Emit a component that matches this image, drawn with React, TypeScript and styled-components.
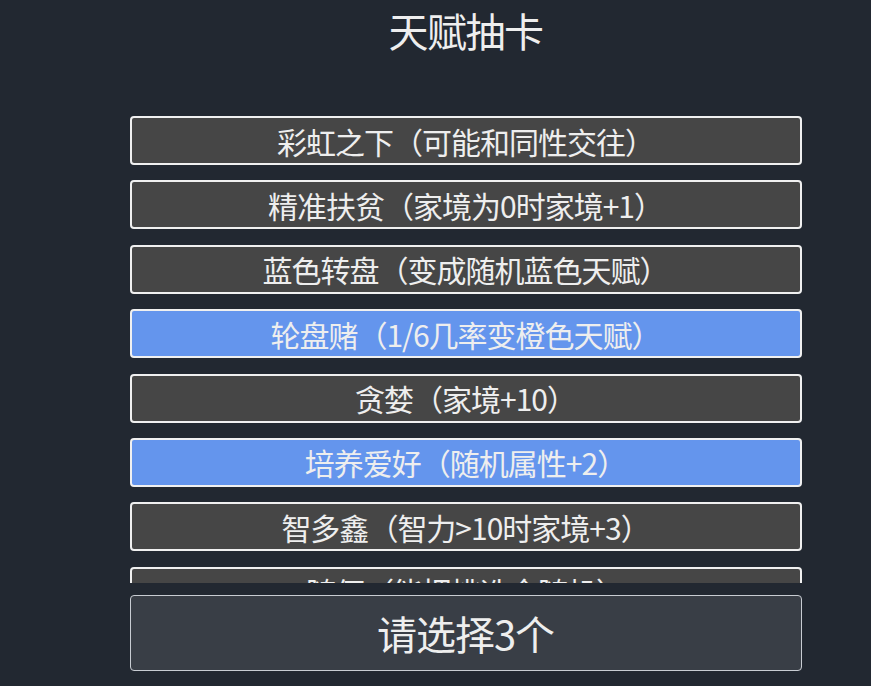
import React, { useState } from 'react'
import styled, { createGlobalStyle } from 'styled-components'

const talents = [
  { id: 1, name: '彩虹之下', desc: '可能和同性交往', picked: false },
  { id: 2, name: '精准扶贫', desc: '家境为0时家境+1', picked: false },
  { id: 3, name: '蓝色转盘', desc: '变成随机蓝色天赋', picked: false },
  { id: 4, name: '轮盘赌', desc: '1/6几率变橙色天赋', picked: true },
  { id: 5, name: '贪婪', desc: '家境+10', picked: false },
  { id: 6, name: '培养爱好', desc: '随机属性+2', picked: true },
  { id: 7, name: '智多鑫', desc: '智力>10时家境+3', picked: false },
  { id: 8, name: '随便', desc: '能把挑选全随机', picked: false },
]

export default function App() {
  const [picked, setPicked] = useState(
    talents.filter((t) => t.picked).map((t) => t.id)
  )

  const toggle = (id: number) => {
    setPicked((p) => (p.includes(id) ? p.filter((x) => x !== id) : [...p, id]))
  }

  return (
    <>
      <GlobalStyle />
      <Page>
        <Title>天赋抽卡</Title>
        <TalentList>
          {talents.map((t) => (
            <TalentItem
              key={t.id}
              $active={picked.includes(t.id)}
              onClick={() => toggle(t.id)}
            >
              {t.name}（{t.desc}）
            </TalentItem>
          ))}
        </TalentList>
        <NextButton>请选择3个</NextButton>
      </Page>
    </>
  )
}

const GlobalStyle = createGlobalStyle`
  html, body {
    margin: 0;
    padding: 0;
    background: #222831;
  }
  body {
    font-family: "Noto Sans CJK SC", "Noto Sans", sans-serif;
    color: #eeeeee;
  }
`

const Page = styled.div`
  height: 686px;
  box-sizing: border-box;
  padding-left: 60px;
  display: flex;
  flex-direction: column;
  align-items: center;
`

const Title = styled.div`
  height: 60px;
  display: flex;
  align-items: center;
  font-size: 40px;
  letter-spacing: -1.5px;
  line-height: 1;
  color: #eeeeee;
`

const TalentList = styled.ul`
  list-style: none;
  margin: 56px 0 0;
  padding: 0;
  width: 672px;
  height: 467px;
  overflow: hidden;
  display: flex;
  flex-direction: column;
  gap: 15.4px;
`

const TalentItem = styled.li<{ $active: boolean }>`
  flex: none;
  height: 49px;
  box-sizing: border-box;
  border: 2px solid #f0f0f0;
  border-radius: 4px;
  background: ${(p) => (p.$active ? '#6495ed' : '#464646')};
  display: flex;
  align-items: center;
  justify-content: center;
  font-size: 30px;
  letter-spacing: -1px;
  color: #eeeeee;
  cursor: pointer;
`

const NextButton = styled.button`
  margin-top: 12px;
  width: 672px;
  height: 76px;
  box-sizing: border-box;
  border: 1.5px solid #c8ccd2;
  border-radius: 4px;
  background: #393e46;
  color: #eeeeee;
  font-family: inherit;
  font-size: 40px;
  letter-spacing: -1px;
  cursor: pointer;
`
